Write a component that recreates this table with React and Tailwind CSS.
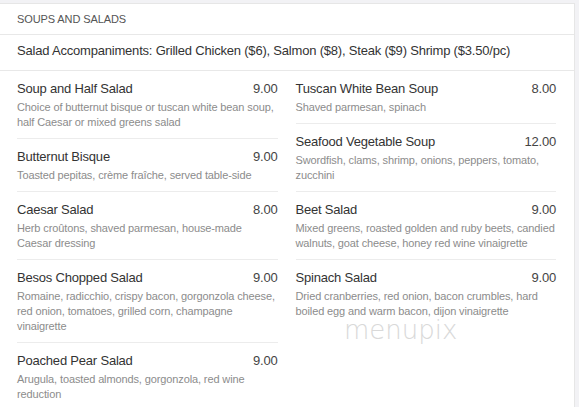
import React from 'react';

const leftItems = [
  {
    name: 'Soup and Half Salad',
    price: '9.00',
    desc: 'Choice of butternut bisque or tuscan white bean soup, half Caesar or mixed greens salad',
  },
  {
    name: 'Butternut Bisque',
    price: '9.00',
    desc: 'Toasted pepitas, crème fraîche, served table-side',
  },
  {
    name: 'Caesar Salad',
    price: '8.00',
    desc: 'Herb croûtons, shaved parmesan, house-made Caesar dressing',
  },
  {
    name: 'Besos Chopped Salad',
    price: '9.00',
    desc: 'Romaine, radicchio, crispy bacon, gorgonzola cheese, red onion, tomatoes, grilled corn, champagne vinaigrette',
  },
  {
    name: 'Poached Pear Salad',
    price: '9.00',
    desc: 'Arugula, toasted almonds, gorgonzola, red wine reduction',
  },
];

const rightItems = [
  {
    name: 'Tuscan White Bean Soup',
    price: '8.00',
    desc: 'Shaved parmesan, spinach',
  },
  {
    name: 'Seafood Vegetable Soup',
    price: '12.00',
    desc: 'Swordfish, clams, shrimp, onions, peppers, tomato, zucchini',
  },
  {
    name: 'Beet Salad',
    price: '9.00',
    desc: 'Mixed greens, roasted golden and ruby beets, candied walnuts, goat cheese, honey red wine vinaigrette',
  },
  {
    name: 'Spinach Salad',
    price: '9.00',
    desc: 'Dried cranberries, red onion, bacon crumbles, hard boiled egg and warm bacon, dijon vinaigrette',
  },
];

function MenuItem({ item, last }) {
  return (
    <div className={last ? 'pt-[9px] pb-2' : 'pt-[9px] pb-2 border-b border-[#ececec]'}>
      <div className="flex justify-between text-[13px] leading-[18px] tracking-[-0.2px] text-[#333]">
        <span>{item.name}</span>
        <span className="text-[#444]">{item.price}</span>
      </div>
      <p className="mt-[2px] text-[11px] leading-[15px] tracking-[-0.12px] text-[#8c8c8c]">{item.desc}</p>
    </div>
  );
}

function Column({ items }) {
  return (
    <div className="flex-1">
      {items.map((item, i) => (
        <MenuItem key={item.name} item={item} last={i === items.length - 1} />
      ))}
    </div>
  );
}

export default function App() {
  return (
    <div className="h-[407px] w-[579px] overflow-hidden bg-[#f2f2f5] font-['Liberation_Sans',Arial,sans-serif]">
      <div className="mt-[3px] h-[404px] w-[575px] border-t border-r border-[#e6e6e6] bg-white relative">
        <div className="flex h-[31px] items-center border-b border-[#e8e8e8] px-[17px] text-[11px] tracking-[-0.1px] text-[#555]">
          SOUPS AND SALADS
        </div>
        <div className="flex h-[36px] items-center border-b border-[#e8e8e8] px-[17px] pb-[3px] text-[13px] tracking-[-0.2px] text-[#333]">
          Salad Accompaniments: Grilled Chicken ($6), Salmon ($8), Steak ($9) Shrimp ($3.50/pc)
        </div>
        <div className="flex gap-[18px] pl-[17px] pr-[18px]">
          <Column items={leftItems} />
          <Column items={rightItems} />
        </div>
        <span className="absolute left-[344px] top-[311px] text-[26px] leading-[30px] font-extralight text-[#d9d9d9] font-['DejaVu_Sans',sans-serif]">
          menupix
        </span>
      </div>
    </div>
  );
}
